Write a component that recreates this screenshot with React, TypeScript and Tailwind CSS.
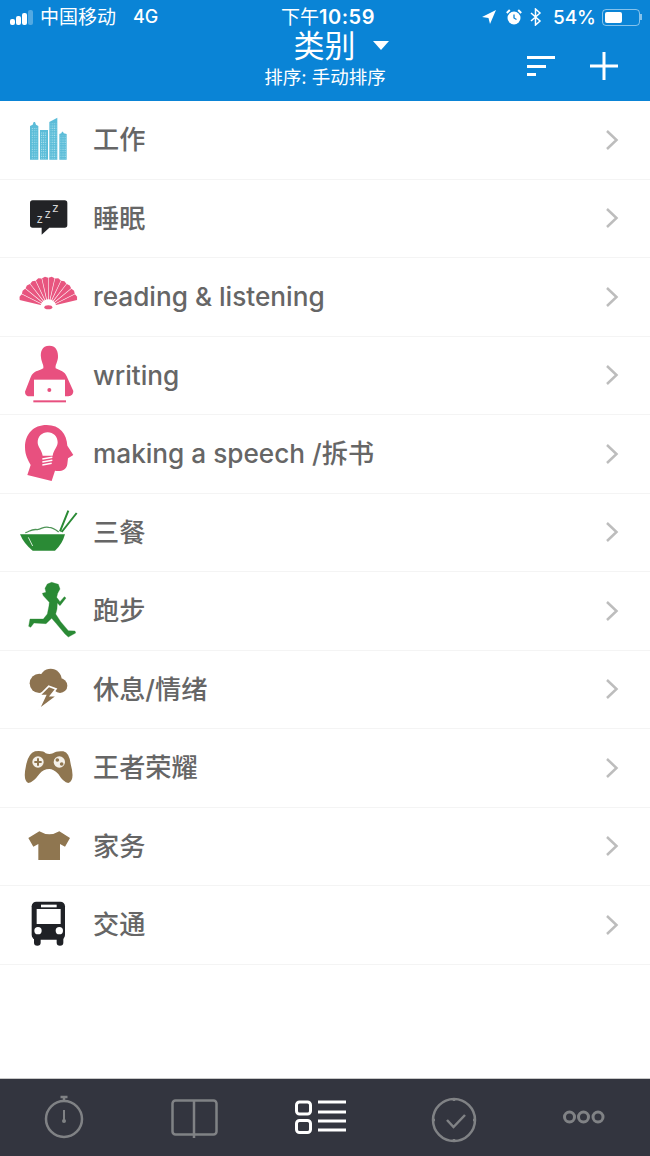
import React from 'react';

const rows = [
  { label: '工作', icon: 'city' },
  { label: '睡眠', icon: 'sleep' },
  { label: 'reading & listening', icon: 'fan' },
  { label: 'writing', icon: 'laptop' },
  { label: 'making a speech /拆书', icon: 'head' },
  { label: '三餐', icon: 'bowl' },
  { label: '跑步', icon: 'runner' },
  { label: '休息/情绪', icon: 'storm' },
  { label: '王者荣耀', icon: 'gamepad' },
  { label: '家务', icon: 'shirt' },
  { label: '交通', icon: 'bus' },
];

// icon shapes are drawn in 3x units, so 180 units = 60px on the page
const RowIcon = ({ name }: { name: string }) => {
  if (name === 'city') {
    return (
      <svg width="60" height="60" viewBox="24 18 180 180">
        <defs>
          <pattern id="windows" width="6.500" height="7" patternUnits="userSpaceOnUse">
            <rect x="1.500" y="1.500" width="3" height="3" fill="#b5e5f0" />
          </pattern>
        </defs>
        <g fill="#5bbcd8">
          <path d="M60 167V66l8-4 3-8h4l3 8 7 4v101z" />
          <rect x="90" y="78" width="24" height="89" />
          <path d="M118 167V54l24-13v126z" />
          <path d="M148 167V90l6-2 2-5h3l2 5 9 2v77z" />
        </g>
        <rect x="63" y="72" width="19" height="92" fill="url(#windows)" />
        <rect x="93" y="84" width="18" height="80" fill="url(#windows)" />
        <rect x="121" y="58" width="18" height="106" fill="url(#windows)" />
        <rect x="151" y="95" width="17" height="69" fill="url(#windows)" />
      </svg>
    );
  }
  if (name === 'sleep') {
    return (
      <svg width="60" height="60" viewBox="24 251 180 180">
        <path d="M68 288h96q8 0 8 8v66q0 8-8 8h-46l-23 21v-21H68q-8 0-8-8v-66q0-8 8-8z" fill="#222326" />
        <g fill="#d6d6d6" fontFamily="Liberation Sans, sans-serif">
          <text x="80" y="355" fontSize="36">z</text>
          <text x="104" y="341" fontSize="36">z</text>
          <text x="127" y="323" fontSize="38">z</text>
        </g>
      </svg>
    );
  }
  if (name === 'fan') {
    const step = 152 / 12;
    const spokes = Array.from({ length: 12 }, (_, i) => -166 + i * step);
    const pt = (deg: number, r: number) => {
      const a = (deg * Math.PI) / 180;
      return `${115 + r * Math.cos(a)} ${610 + r * Math.sin(a)}`;
    };
    return (
      <svg width="60" height="60" viewBox="24 489 180 180">
        <g fill="#e8557f">
          {spokes.map((deg, i) => (
            <path
              key={i}
              d={`M${pt(deg + 2.500, 24)}L${pt(deg + 0.500, 89)}L${pt(deg + step / 2, 92)}L${pt(deg + step - 0.500, 89)}L${pt(deg + step - 2.500, 24)}z`}
            />
          ))}
          <ellipse cx="115" cy="610" rx="12" ry="6" />
        </g>
      </svg>
    );
  }
  if (name === 'laptop') {
    return (
      <svg width="60" height="60" viewBox="24 18 180 180">
        <path
          d="M118 20C95 20 91 40 93 55c1 15 9 23 7 33-15 9-30 7-38 27L45 158q0 14 15 14h115q15-2 15-16l-20-44c-5-14-20-17-33-24-2-10 6-18 7-33 1-15-4-35-26-35z"
          fill="#e8507f"
        />
        <rect x="72" y="122" width="93" height="56" fill="#fff" />
        <circle cx="118" cy="153" r="6" fill="#e8507f" />
        <rect x="70" y="184" width="98" height="6" fill="#e8507f" />
      </svg>
    );
  }
  if (name === 'head') {
    return (
      <svg width="60" height="60" viewBox="24 255 180 180">
        <path
          d="M110 258C70 258 45 285 45 325c0 25 10 40 17 53l-10 30 73 18 10-31c15 3 35 0 37-20l2-17 16-10-18-28c-2-35-22-62-62-62z"
          fill="#e8507f"
        />
        <path
          d="M113 280c-17 0-30 13-30 30 0 15 12 22 15 40h30c3-18 15-25 15-40 0-17-13-30-30-30z"
          fill="#fff"
        />
        <g stroke="#fff" strokeWidth="4.500">
          <path d="M97 360l30-5" />
          <path d="M97 369l30-5" />
          <path d="M97 378l28-5" />
        </g>
      </svg>
    );
  }
  if (name === 'bowl') {
    return (
      <svg width="60" height="60" viewBox="24 9 180 180">
        <path d="M30 106h135q-8 30-30 49H68Q42 135 30 106z" fill="#2a8a35" />
        <path d="M55 115l13 26" stroke="#d6ebd8" strokeWidth="3" />
        <path
          d="M46 101c12-3 18-12 36-9 14-2 20-11 34-7 10 0 18 4 30 14"
          fill="none"
          stroke="#4f9558"
          strokeWidth="4"
        />
        <path d="M150 97l25-62M155 99l45-57" fill="none" stroke="#2a8a35" strokeWidth="6" />
      </svg>
    );
  }
  if (name === 'runner') {
    return (
      <svg width="60" height="60" viewBox="24 246 180 180">
        <path
          d="M125 250L145 256 150 270 143 283 140 295 150 308 163 293 168 297 150 320 142 312 141 330 137 345 152 368 175 395 195 396 197 402 175 414 165 405 140 375 125 358 108 374 72 372 62 385 56 382 60 360 100 360 112 345 117 320 118 310 100 290 97 283 108 280 105 268 112 255z"
          fill="#2a8a35"
          stroke="#2a8a35"
          strokeWidth="1"
          strokeLinejoin="round"
        />
      </svg>
    );
  }
  if (name === 'storm') {
    return (
      <svg width="60" height="60" viewBox="24 480 180 180">
        <g fill="#8d7350">
          <circle cx="88" cy="553" r="29" />
          <circle cx="122" cy="542" r="33" />
          <circle cx="150" cy="560" r="22" />
        </g>
        <path d="M116 562L88 590h18l-20 42 56-42h-20l16-20z" fill="#8d7350" stroke="#fff" strokeWidth="5" strokeLinejoin="miter" />
      </svg>
    );
  }
  if (name === 'gamepad') {
    return (
      <svg width="60" height="60" viewBox="24 12 180 180">
        <path
          d="M75 52q25-3 32 6 11 4 22 0 9-8 31-6 18 4 22 38 14 50-7 57-15-2-30-27-15-15-27-15-18 0-30 15-18 25-33 27-17-7-7-52 7-37 27-43z"
          fill="#8f7650"
        />
        <circle cx="84" cy="84" r="17" fill="#f4f0e8" />
        <circle cx="148" cy="84" r="17" fill="#f4f0e8" />
        <path d="M84 73v22M73 84h22" stroke="#8f7650" strokeWidth="6" />
        <circle cx="142" cy="78" r="5.500" fill="#8f7650" />
        <circle cx="155" cy="90" r="5.500" fill="#8f7650" />
      </svg>
    );
  }
  if (name === 'shirt') {
    return (
      <svg width="60" height="60" viewBox="24 246 180 180">
        <path d="M88 292q30 18 60 0l32 20-15 26-15-8v48H85v-48l-15 8-15-26z" fill="#8f7650" />
      </svg>
    );
  }
  return (
    <svg width="60" height="60" viewBox="24 483 180 180">
      <path d="M72 610h20v16q0 9-10 9t-10-9zM140 610h20v16q0 9-10 9t-10-9z" fill="#1f2126" />
      <rect x="65" y="503" width="100" height="114" rx="14" fill="#1f2126" />
      <rect x="93" y="512" width="47" height="8" fill="#fff" />
      <rect x="80" y="525" width="72" height="45" fill="#fff" />
      <circle cx="84" cy="590" r="11" fill="#fff" />
      <circle cx="148" cy="590" r="11" fill="#fff" />
    </svg>
  );
};

const StatusBar = () => (
  <div className="grid grid-cols-[1fr_auto_1fr] items-center h-[34px] text-white">
    <div className="flex items-center pl-[10px]">
      <div className="flex items-end gap-[1px] w-[30px] h-[15px]">
        <span className="w-[5px] h-[6px] rounded-[2px] bg-white"></span>
        <span className="w-[5px] h-[9px] rounded-[2px] bg-white"></span>
        <span className="w-[5px] h-[12px] rounded-[2px] bg-white"></span>
        <span className="w-[5px] h-[15px] rounded-[2px] bg-white/30"></span>
      </div>
      <span className="text-[19px] leading-none">中国移动</span>
      <span className="ml-[17px] text-[18px] leading-none font-medium">4G</span>
    </div>
    <div className="ml-[6px] text-[19px] leading-none">
      下午<span className="text-[20px] font-semibold tracking-[0.500px]">10:59</span>
    </div>
    <div className="flex items-center justify-end pr-[8px]">
      <svg width="14" height="14" viewBox="0 0 14 14" className="mr-[10px]">
        <path d="M14 0L0 7l6.500 1L8 14z" fill="#fff" />
      </svg>
      <svg width="16" height="16" viewBox="0 0 16 16" className="mr-[8px]">
        <circle cx="8" cy="9" r="6.500" fill="#fff" />
        <path d="M8 5.500V9l2.500 1.500" fill="none" stroke="#0a84d6" strokeWidth="1.300" />
        <path d="M0.800 4l3-3M15.200 4l-3-3" stroke="#fff" strokeWidth="2" />
      </svg>
      <svg width="12" height="18" viewBox="0 0 12 18" className="mr-[9px]">
        <path d="M1 5l9 8-4.500 4V1L10 5 1 13" fill="none" stroke="#fff" strokeWidth="1.500" />
      </svg>
      <span className="text-[19px] leading-none font-medium mr-[6px] ml-[2px]">54%</span>
      <div className="flex items-center">
        <div className="w-[38px] h-[17px] rounded-[4px] border border-white/50 p-[2px]">
          <div className="w-[54%] h-full rounded-[2px] bg-white"></div>
        </div>
        <div className="w-[2px] h-[6px] bg-white/50"></div>
      </div>
    </div>
  </div>
);

const Header = () => (
  <div className="h-[101px] bg-[#0a84d6] text-white">
    <StatusBar />
    <div className="grid grid-cols-[1fr_auto_1fr] items-start">
      <div></div>
      <div className="flex flex-col items-center -mt-[1px]">
        <div className="flex items-center h-[24px] pl-[32px]">
          <span className="text-[31px] leading-none">类别</span>
          <span className="ml-[17px] w-0 h-0 border-x-[8px] border-x-transparent border-t-[9px] border-t-white"></span>
        </div>
        <div className="mt-[8px] text-[18.500px] leading-[24px]">排序: 手动排序</div>
      </div>
      <div className="flex justify-end items-center h-[60px] pr-[31px] gap-[34px] mt-[2px]">
        <div className="flex flex-col gap-[5.500px] w-[28px]">
          <span className="h-[3px] w-full bg-white"></span>
          <span className="h-[3px] w-[19px] bg-white"></span>
          <span className="h-[3px] w-[9px] bg-white"></span>
        </div>
        <svg width="30" height="30" viewBox="0 0 30 30">
          <path d="M15 1v28M1 15h28" stroke="#fff" strokeWidth="3" />
        </svg>
      </div>
    </div>
  </div>
);

const ListRow = ({ label, icon }: { label: string; icon: string }) => (
  <div className="flex items-center h-[78.500px] border-b border-[#f4f4f4] bg-white">
    <div className="flex justify-center w-[93px] pl-[3px] shrink-0">
      <RowIcon name={icon} />
    </div>
    <div className="flex-1 pt-[1px] text-[26.200px] leading-none font-medium text-[#666]">{label}</div>
    <svg width="14" height="22" viewBox="0 0 14 22" className="mr-[31px]">
      <path d="M2 2l9.500 9L2 20" fill="none" stroke="#bdbdbd" strokeWidth="2.500" />
    </svg>
  </div>
);

const TabBar = () => (
  <div className="grid grid-cols-5 h-[78px] border-t border-[#c8c8c8] bg-[#33353f]">
    <div className="flex items-center justify-center">
      <svg width="60" height="60" viewBox="35 1088 60 60" fill="none" stroke="#808285" strokeWidth="2.500">
        <circle cx="64" cy="1119" r="18" />
        <path d="M64 1098v3M60.500 1097h7" />
        <path d="M64 1110v10" strokeWidth="2" />
        <circle cx="64" cy="1121" r="2" fill="#808285" stroke="none" />
      </svg>
    </div>
    <div className="flex items-center justify-center">
      <svg width="60" height="60" viewBox="165 1088 60 60" fill="none" stroke="#808285" strokeWidth="2.500">
        <rect x="172.500" y="1100.500" width="44" height="34" rx="3" />
        <path d="M194 1100v38" />
      </svg>
    </div>
    <div className="flex items-center justify-center">
      <svg width="60" height="60" viewBox="295 1088 60 60" fill="none" stroke="#fff" strokeWidth="3">
        <rect x="296.500" y="1102" width="14" height="12" rx="3" />
        <rect x="296.500" y="1120.500" width="14" height="12" rx="3" />
        <path d="M318 1102h28M318 1112h28M318 1121h28M318 1130h28" />
      </svg>
    </div>
    <div className="flex items-center justify-center">
      <svg width="60" height="60" viewBox="425 1088 60 60" fill="none" stroke="#808285" strokeWidth="2.500">
        <circle cx="454" cy="1120" r="21" />
        <path d="M454 1098v3M454 1139v3M432 1120h3M473 1120h3" />
        <path d="M447 1120l6.500 7 11.500-12" />
      </svg>
    </div>
    <div className="flex items-center justify-center">
      <svg width="60" height="60" viewBox="555 1088 60 60" fill="none" stroke="#808285" strokeWidth="3">
        <circle cx="569.500" cy="1117" r="5" />
        <circle cx="583.500" cy="1117" r="5" />
        <circle cx="598" cy="1117" r="5" />
      </svg>
    </div>
  </div>
);

const App = () => {
  return (
    <div className="flex flex-col w-[650px] h-[1156px] bg-white overflow-hidden font-['Inter','Noto_Sans_CJK_SC',sans-serif]">
      <Header />
      <div className="flex-1">
        {rows.map((row) => (
          <ListRow key={row.label} label={row.label} icon={row.icon} />
        ))}
      </div>
      <TabBar />
    </div>
  );
};

export default App;
